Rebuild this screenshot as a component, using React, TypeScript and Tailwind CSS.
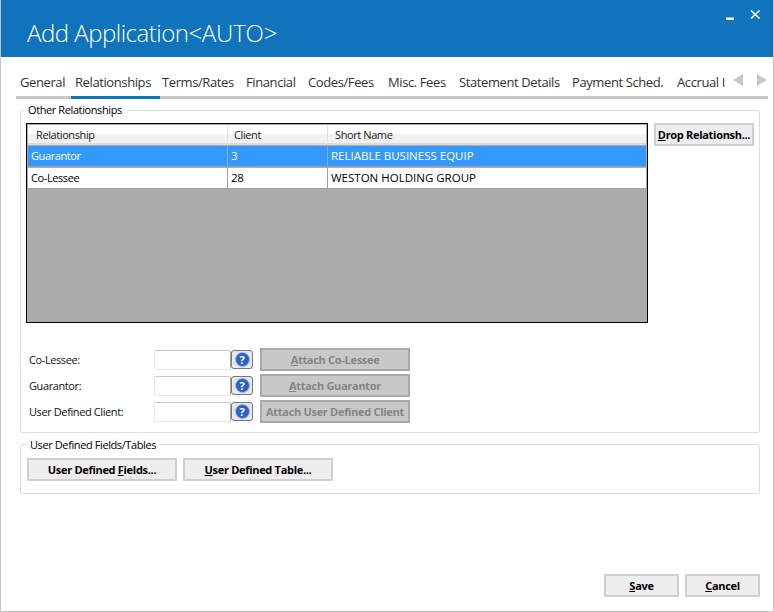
import React from 'react'

const font = "font-['Open_Sans',sans-serif]"

const tabs = [
  {label: 'General', box: 'w-[55px] pl-[4px]'},
  {label: 'Relationships', box: 'w-[89px] pl-[4px]', active: true},
  {label: 'Terms/Rates', box: 'w-[82px] pl-[2px]'},
  {label: 'Financial', box: 'w-[62px] pl-[4px]'},
  {label: 'Codes/Fees', box: 'w-[80px] pl-[4px]'},
  {label: 'Misc. Fees', box: 'w-[71px] pl-[4px]'},
  {label: 'Statement Details', box: 'w-[113px] pl-[4px]'},
  {label: 'Payment Sched.', box: 'w-[105px] pl-[4px]'},
]

const rows = [
  {relationship: 'Guarantor', client: '3', name: 'RELIABLE BUSINESS EQUIP', selected: true},
  {relationship: 'Co-Lessee', client: '28', name: 'WESTON HOLDING GROUP'},
]

const lookups = [
  {label: 'Co-Lessee:', key: 'A', rest: 'ttach Co-Lessee'},
  {label: 'Guarantor:', key: 'A', rest: 'ttach Guarantor'},
  {label: 'User Defined Client:', key: '', rest: 'Attach User Defined Client'},
]

function ActionButton({className, children}: {className: string; children: React.ReactNode}) {
  return (
    <button
      type="button"
      className={`h-[23px] border-2 border-[#cfcfcf] bg-[#eeeeee] text-[11px] font-bold leading-none tracking-[-0.3px] text-black ${className}`}
    >
      {children}
    </button>
  )
}

function HelpButton() {
  return (
    <button
      type="button"
      className="flex h-[19px] w-[22px] items-center justify-center rounded-[3px] border border-[#777777] bg-[#e8e8e8]"
    >
      <span className="flex h-[15px] w-[15px] items-center justify-center rounded-full border border-[#9db8e6] bg-[#2a62c8] text-[11px] font-bold leading-none text-white">
        ?
      </span>
    </button>
  )
}

export default function App() {
  return (
    <div className={`flex h-[612px] w-[774px] flex-col overflow-hidden border-x border-b border-[#c4c4c4] bg-white text-[11px] tracking-[-0.4px] text-black ${font}`}>
      {/* title bar */}
      <div className="-mx-px flex h-[57px] shrink-0 items-start justify-between bg-[#0f74bc]">
        <h1 className="ml-[27px] mt-[16px] text-[24px] font-light leading-[33px] tracking-[-0.5px] text-white">
          Add Application<span className="tracking-[-0.2px]">&lt;AUTO&gt;</span>
        </h1>
        <div className="mr-[13px] mt-[9px] flex items-start gap-[16px]">
          <svg width="8" height="11" viewBox="0 0 8 11"><rect x="0" y="8.5" width="8" height="2.5" fill="#fff" /></svg>
          <svg width="11" height="11" viewBox="0 0 11 11"><path d="M1 1.5l8.5 8M9.5 1.5l-8.5 8" stroke="#fff" strokeWidth="1.7" fill="none" /></svg>
        </div>
      </div>

      {/* tab strip */}
      <div className="ml-[15px] mt-[15px] flex h-[27px] w-[752px] shrink-0 border-b-[3px] border-[#c8c8c8]">
        {tabs.map(tab => (
          <div
            key={tab.label}
            className={`-mb-[3px] h-[27px] shrink-0 whitespace-nowrap text-[13px] leading-[20px] tracking-[-0.4px] text-[#333333] ${tab.box} ${
              tab.active ? 'border-b-[3px] border-[#0f74bc]' : ''
            }`}
          >
            {tab.label}
          </div>
        ))}
        <div className="h-[24px] w-[53px] shrink-0 overflow-hidden whitespace-nowrap pl-[4px] text-[13px] leading-[20px] tracking-[-0.4px] text-[#333333]">
          Accrual I
        </div>
        <div className="ml-[7px] mt-[2px] flex h-[14px] items-start gap-[14px]">
          <svg width="10" height="12" viewBox="0 0 10 12"><path d="M10 0v12L0 6z" fill="#c8c8c8" /></svg>
          <svg width="10" height="12" viewBox="0 0 10 12"><path d="M0 0v12l10-6z" fill="#c8c8c8" /></svg>
        </div>
      </div>

      {/* other relationships */}
      <fieldset className="ml-[19px] mt-[3px] h-[331px] w-[740px] shrink-0 rounded-[3px] border border-[#d5dfe5] pl-[5px]">
        <legend className="-ml-px h-[16px] px-[3px] leading-[16px]">Other Relationships</legend>
        <div className="mt-[5px] flex items-start gap-[6px]">
          <div className="flex h-[200px] w-[622px] shrink-0 flex-col border border-black bg-[#ababab] p-px">
            <div className="grid h-[20px] grid-cols-[200px_100px_1fr] border-b-2 border-[#dcdcdc] bg-gradient-to-b from-white from-50% to-[#f1f1f1] to-50% leading-[19px] text-[#222222]">
              <div className="border-r border-[#e3e3e3] pl-[8px]">Relationship</div>
              <div className="border-r border-[#e3e3e3] pl-[6px]">Client</div>
              <div className="pl-[7px]">Short Name</div>
            </div>
            {rows.map(row => (
              <div
                key={row.relationship}
                className={`mt-px grid h-[21px] grid-cols-[200px_100px_1fr] border-b border-[#a0a0a0] leading-[20px] ${
                  row.selected ? 'bg-[#3399ff] text-white' : 'bg-white text-black'
                }`}
              >
                <div className="border-r border-[#a0a0a0] pl-[3px]">{row.relationship}</div>
                <div className="border-r border-[#a0a0a0] pl-[3px] text-[11.5px]">{row.client}</div>
                <div className="pl-[3px] text-[11.5px] tracking-[0px]">{row.name}</div>
              </div>
            ))}
          </div>
          <ActionButton className="w-[100px] whitespace-nowrap">
            <u>D</u>rop Relationsh...
          </ActionButton>
        </div>

        <div className="mt-[25px] flex flex-col gap-[3px]">
          {lookups.map(item => (
            <div key={item.label} className="flex h-[23px] items-center">
              <span className="ml-[3px] w-[125px] shrink-0 pt-[1px] text-[#111111]">{item.label}</span>
              <input
                readOnly
                className="h-[20px] w-[77px] rounded-[2px] border border-[#dfe5e9] border-t-[#c9c9c9] border-r-[#a9a9a9] bg-white"
              />
              <HelpButton />
              <button
                type="button"
                className="ml-[7px] h-[23px] w-[150px] whitespace-nowrap border-2 border-[#a9a9a9] bg-[#c8c8c8] text-[11px] font-bold leading-none tracking-[-0.3px] text-[#858585]"
              >
                {item.key && <u>{item.key}</u>}
                {item.rest}
              </button>
            </div>
          ))}
        </div>
      </fieldset>

      {/* user defined fields */}
      <fieldset className="ml-[19px] mt-[3px] h-[58px] w-[740px] shrink-0 rounded-[3px] border border-[#d5dfe5] pl-[6px]">
        <legend className="h-[16px] px-[3px] leading-[17px]">User Defined Fields/Tables</legend>
        <div className="mt-[6px] flex gap-[6px]">
          <ActionButton className="w-[150px]">
            User Defined <u>F</u>ields...
          </ActionButton>
          <ActionButton className="w-[150px]">
            <u>U</u>ser Defined Table...
          </ActionButton>
        </div>
      </fieldset>

      {/* footer */}
      <div className="mr-[13px] mt-[80px] flex justify-end gap-[6px]">
        <ActionButton className="w-[75px]">
          <u>S</u>ave
        </ActionButton>
        <ActionButton className="w-[75px]">
          <u>C</u>ancel
        </ActionButton>
      </div>
    </div>
  )
}
